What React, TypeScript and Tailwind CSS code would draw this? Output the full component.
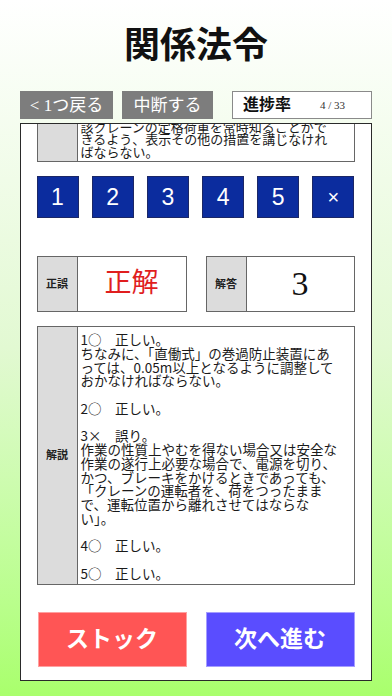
import React from "react";

const serif = { fontFamily: '"Liberation Serif", "Noto Sans CJK JP", serif' };
const sans = { fontFamily: '"Noto Sans CJK JP", sans-serif' };
const latin = { fontFamily: '"Liberation Sans", "Noto Sans CJK JP", sans-serif' };

const qLines = [
  "るクレーンにあっては、当該クレーンの",
  "該クレーンの定格荷重を常時知ることがで",
  "きるよう、表示その他の措置を講じなけれ",
  "ばならない。",
];

const expLines = [
  "1○　正しい。",
  "ちなみに、「直働式」の巻過防止装置にあ",
  "っては、0.05m以上となるように調整して",
  "おかなければならない。",
  "",
  "2○　正しい。",
  "",
  "3×　誤り。",
  "作業の性質上やむを得ない場合又は安全な",
  "作業の遂行上必要な場合で、電源を切り、",
  "かつ、ブレーキをかけるときであっても、",
  "「クレーンの運転者を、荷をつったまま",
  "で、運転位置から離れさせてはならな",
  "い」。",
  "",
  "4○　正しい。",
  "",
  "5○　正しい。",
];

export default function App() {
  const nums = ["1", "2", "3", "4", "5", "×"];
  return (
    <div className="w-[392px] h-[696px] overflow-hidden flex flex-col bg-gradient-to-b from-[#ffffff] via-[#e2f9d2] to-[#a9ff6c]">
      <div className="h-[91px] flex items-center justify-center">
        <h1 className="text-[36px] leading-none font-bold text-[#111]" style={serif}>
          関係法令
        </h1>
      </div>
      <div className="h-[28px] flex px-[20px]">
        <div className="w-[93px] h-[28px] bg-[#7d7d7d] text-white text-[17px] leading-none flex items-center justify-center" style={serif}>
          &lt; 1つ戻る
        </div>
        <div className="ml-[9px] w-[91px] h-[28px] bg-[#7d7d7d] text-white text-[17px] leading-none flex items-center justify-center" style={serif}>
          中断する
        </div>
        <div className="ml-[19px] w-[140px] h-[28px] bg-white border border-[#8a8a8a] flex items-center pl-[10px]">
          <span className="text-[16px] leading-none font-bold text-[#111]" style={serif}>進捗率</span>
          <span className="ml-[29px] text-[11px] leading-none text-[#333]" style={serif}>4 / 33</span>
        </div>
      </div>
      <div className="mt-[4px] ml-[20px] w-[352px] h-[558px] bg-white border-[1.5px] border-[#2a2a2a] overflow-hidden pl-[15.5px] pr-[16.5px] flex flex-col">
        <div className="h-[38px] overflow-hidden flex flex-col justify-end shrink-0">
          <div className="flex border-[1.5px] border-[#666] shrink-0">
            <div className="w-[40px] bg-[#dcdcdc] border-r-[1.5px] border-[#666] shrink-0" />
            <div className="pl-[3px] pb-[3px] text-[13px] leading-[12.5px] text-[#1a1a1a]" style={sans}>
              {qLines.map((l, i) => (
                <div key={i} className="whitespace-nowrap">{l}</div>
              ))}
            </div>
          </div>
        </div>
        <div className="mt-[14px] flex justify-between">
          {nums.map((n) => (
            <div
              key={n}
              className={`w-[42px] h-[42px] bg-[#0b2c9e] border border-[#1b2766] text-white leading-none flex items-center justify-center ${n === "×" ? "text-[20px]" : "text-[23px]"}`}
              style={latin}
            >
              {n}
            </div>
          ))}
        </div>
        <div className="mt-[38px] flex justify-between">
          <div className="w-[150px] h-[56px] flex border-[1.5px] border-[#666]">
            <div className="w-[40px] bg-[#dcdcdc] border-r-[1.5px] border-[#666] flex items-center justify-center text-[11px] leading-none font-bold text-[#222]" style={serif}>
              正誤
            </div>
            <div className="flex-1 flex items-center justify-center text-[27px] leading-none text-[#e01e1e] pb-[2px]" style={serif}>
              正解
            </div>
          </div>
          <div className="w-[149px] h-[56px] flex border-[1.5px] border-[#666]">
            <div className="w-[40px] bg-[#dcdcdc] border-r-[1.5px] border-[#666] flex items-center justify-center text-[11px] leading-none font-bold text-[#222]" style={serif}>
              解答
            </div>
            <div className="flex-1 flex items-center justify-center text-[34px] leading-none text-[#111]" style={serif}>
              3
            </div>
          </div>
        </div>
        <div className="mt-[14px] h-[259px] flex border-[1.5px] border-[#666]">
          <div className="w-[40px] bg-[#dcdcdc] border-r-[1.5px] border-[#666] flex items-center justify-center text-[11px] leading-none font-bold text-[#222] shrink-0" style={serif}>
            解説
          </div>
          <div className="pl-[3px] pt-[6px] text-[13.5px] leading-[13.75px] text-[#1a1a1a]" style={sans}>
            {expLines.map((l, i) => (
              <div key={i} className="whitespace-nowrap h-[13.75px]">{l}</div>
            ))}
          </div>
        </div>
        <div className="mt-[27px] flex justify-between pl-[1px]">
          <div className="w-[149px] h-[55px] bg-[#ff5555] border border-[#ffa0a0] text-white text-[23px] leading-none font-bold flex items-center justify-center" style={serif}>
            ストック
          </div>
          <div className="w-[149px] h-[55px] bg-[#5a4dff] border border-[#a59dff] text-white text-[23px] leading-none font-bold flex items-center justify-center" style={serif}>
            次へ進む
          </div>
        </div>
      </div>
    </div>
  );
}
